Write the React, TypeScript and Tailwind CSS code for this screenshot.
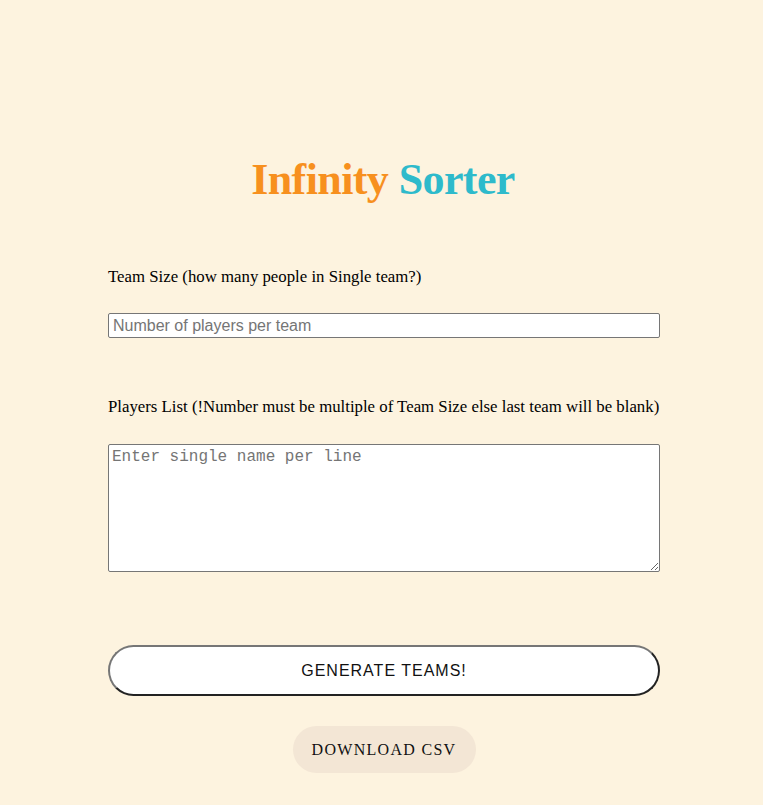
import React, { useState } from 'react';

const App = () => {
    const [teamSize, setTeamSize] = useState("");
    const [players, setPlayers] = useState("");

    return (
        <div className="min-h-screen bg-[#fdf3df] flex flex-col items-center pt-[154px] pl-[5px]" style={{ fontFamily: '"Liberation Serif", serif' }}>
            <h1 className="text-[44px] font-bold leading-[52px] tracking-[-0.6px] -ml-[2px]">
                <span className="text-[#f7901e]">Infinity</span> <span className="text-[#2ebacb]">Sorter</span>
            </h1>
            <div className="w-[552px] flex flex-col mt-[61px]">
                <label htmlFor="size" className="text-[16.8px] text-black leading-[20px]">Team Size (how many people in Single team?)</label>
                <input
                    id="size"
                    type="number"
                    value={teamSize}
                    onChange={(e) => setTeamSize(e.target.value)}
                    placeholder="Number of players per team"
                    className="mt-[26px] h-[25px] w-full bg-white border border-[#767676] rounded-[2px] px-[4px] text-base text-black placeholder:text-[#757575] outline-none"
                    style={{ fontFamily: '"Liberation Sans", Arial, sans-serif' }}
                />
                <label htmlFor="players" className="mt-[59px] text-[16.8px] text-black leading-[20px]">Players List (!Number must be multiple of Team Size else last team will be blank)</label>
                <textarea
                    id="players"
                    value={players}
                    onChange={(e) => setPlayers(e.target.value)}
                    placeholder="Enter single name per line"
                    className="mt-[27px] h-[128px] w-full bg-white border border-[#767676] rounded-[2px] px-[3px] py-[3px] text-base leading-[18px] text-black placeholder:text-[#757575] outline-none resize-y"
                    style={{ fontFamily: '"Liberation Mono", "Courier New", monospace' }}
                />
                <button
                    className="mt-[73px] h-[51px] w-full bg-white rounded-full border-2 border-t-[#767676] border-l-[#767676] border-r-[#222] border-b-[#222] text-base tracking-[1px] text-[#111]"
                    style={{ fontFamily: '"Liberation Sans", Arial, sans-serif' }}
                >
                    GENERATE TEAMS!
                </button>
                <div className="flex justify-center mt-[30px]">
                    <button className="h-[47px] w-[183px] rounded-full bg-[#f3e6d5] text-base tracking-[1.3px] text-[#111]">
                        DOWNLOAD CSV
                    </button>
                </div>
            </div>
        </div>
    );
};

export default App;
